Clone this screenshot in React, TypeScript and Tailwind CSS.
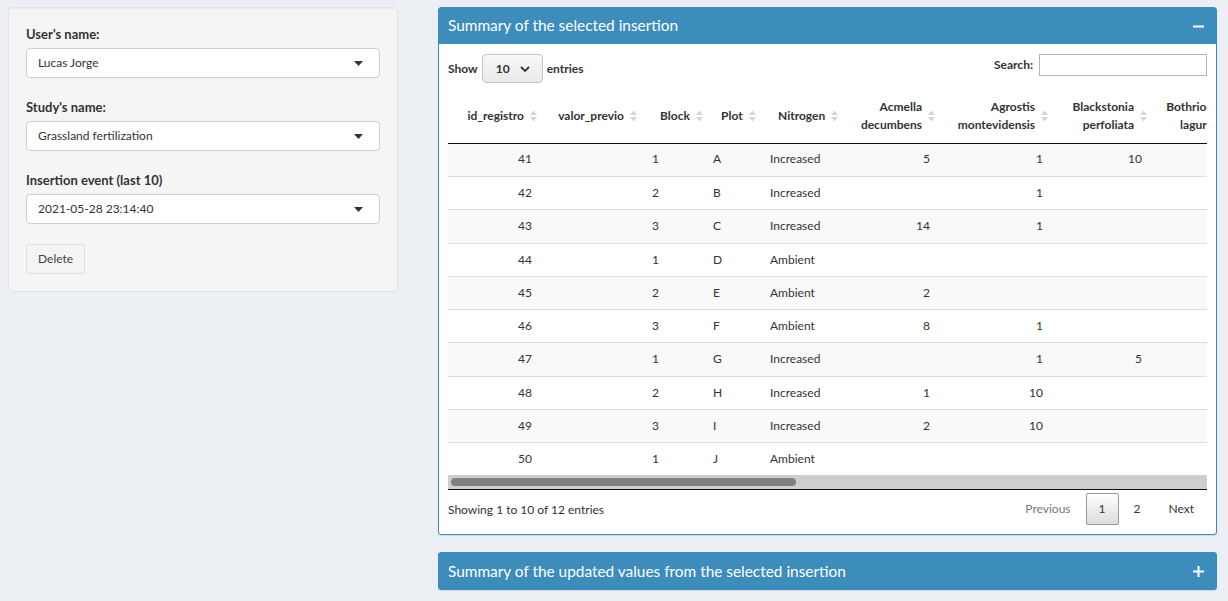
import React from 'react';

type Col = {
  key: string;
  label: string[];
  width: string;
  right: boolean;
};

const columns: Col[] = [
  { key: 'id', label: ['id_registro'], width: 'w-[94px]', right: true },
  { key: 'valor', label: ['valor_previo'], width: 'w-[100px]', right: true },
  { key: 'block', label: ['Block'], width: 'w-[61px]', right: false },
  { key: 'plot', label: ['Plot'], width: 'w-[57px]', right: false },
  { key: 'nitrogen', label: ['Nitrogen'], width: 'w-[85px]', right: false },
  { key: 'acm', label: ['Acmella', 'decumbens'], width: 'w-[95px]', right: true },
  { key: 'agr', label: ['Agrostis', 'montevidensis'], width: 'w-[113px]', right: true },
  { key: 'bla', label: ['Blackstonia', 'perfoliata'], width: 'w-[99px]', right: true },
  { key: 'bot', label: ['Bothriochloa', 'laguroides'], width: 'w-[101px]', right: true },
  { key: 'bri', label: ['Briza', 'minor'], width: 'w-[80px]', right: true },
  { key: 'car', label: ['Carex', 'bonariensis'], width: 'w-[100px]', right: true },
];

type Row = Record<string, string>;

const rows: Row[] = [
  { id: '41', block: '1', plot: 'A', nitrogen: 'Increased', acm: '5', agr: '1', bla: '10' },
  { id: '42', block: '2', plot: 'B', nitrogen: 'Increased', agr: '1' },
  { id: '43', block: '3', plot: 'C', nitrogen: 'Increased', acm: '14', agr: '1' },
  { id: '44', block: '1', plot: 'D', nitrogen: 'Ambient' },
  { id: '45', block: '2', plot: 'E', nitrogen: 'Ambient', acm: '2' },
  { id: '46', block: '3', plot: 'F', nitrogen: 'Ambient', acm: '8', agr: '1' },
  { id: '47', block: '1', plot: 'G', nitrogen: 'Increased', agr: '1', bla: '5' },
  { id: '48', block: '2', plot: 'H', nitrogen: 'Increased', acm: '1', agr: '10' },
  { id: '49', block: '3', plot: 'I', nitrogen: 'Increased', acm: '2', agr: '10' },
  { id: '50', block: '1', plot: 'J', nitrogen: 'Ambient' },
];

const SortIcon = () => (
  <svg width="7" height="14" viewBox="0 0 7 14" className="shrink-0">
    <polygon points="0,6 3.5,1.5 7,6" fill="#d6d6d6" />
    <polygon points="0,8 3.5,12.5 7,8" fill="#d6d6d6" />
  </svg>
);

const Caret = () => (
  <svg width="9" height="5" viewBox="0 0 9 5">
    <polygon points="0,0 9,0 4.5,5" fill="#333" />
  </svg>
);

const FakeSelect = ({ value }: { value: string }) => (
  <div className="flex h-[30px] items-center justify-between rounded-[4px] border border-[#cfcfcf] bg-white pl-[11px] pr-[16px] text-[12px] text-[#333]">
    <span>{value}</span>
    <Caret />
  </div>
);

const Field = ({ label, value }: { label: string; value: string }) => (
  <div className="mb-[20px]">
    <div className="mb-[5px] text-[13px] font-bold leading-[18px] text-[#333]">{label}</div>
    <FakeSelect value={value} />
  </div>
);

const App: React.FC = () => {
  return (
    <div className="min-h-screen bg-[#ecf0f5] font-[Lato,sans-serif] text-[#333]">
      <div className="flex gap-[40px] pl-[8px] pt-[7px]">
        {/* sidebar well */}
        <div className="w-[390px] self-start rounded-[4px] border border-[#e3e3e3] bg-[#f5f5f5] p-[17px] shadow-[inset_0_1px_1px_rgba(0,0,0,0.05)]">
          <Field label="User's name:" value="Lucas Jorge" />
          <Field label="Study's name:" value="Grassland fertilization" />
          <Field label="Insertion event (last 10)" value="2021-05-28 23:14:40" />
          <button className="h-[30px] rounded-[3px] border border-[#ddd] bg-[#f4f4f4] px-[11px] text-[12px] text-[#444]">
            Delete
          </button>
        </div>

        <div className="w-[779px]">
          {/* main box */}
          <div className="mb-[17px] rounded-[3px] border border-[#3c8dbc] bg-white shadow-[0_1px_1px_rgba(0,0,0,0.1)]">
            <div className="flex h-[36px] items-center justify-between bg-[#3c8dbc] pl-[9px] pr-[12px] text-white">
              <span className="text-[15.4px]">Summary of the selected insertion</span>
              <svg width="11" height="11" viewBox="0 0 11 11">
                <rect x="0" y="4.5" width="11" height="2" fill="#fff" />
              </svg>
            </div>
            <div className="px-[9px] pb-[9px] pt-[10px]">
              <div className="flex items-start justify-between">
                <div className="flex h-[29px] items-center text-[12px] font-bold">
                  <span>Show</span>
                  <div className="mx-[4px] flex h-[29px] w-[61px] items-center justify-between rounded-[4px] border border-[#c4c4c4] bg-gradient-to-b from-[#f8f8f8] to-[#e9e9e9] pl-[13px] pr-[12px]">
                    <span>10</span>
                    <svg width="10" height="6" viewBox="0 0 10 6">
                      <path d="M1 1 L5 5 L9 1" stroke="#333" strokeWidth="1.8" fill="none" />
                    </svg>
                  </div>
                  <span>entries</span>
                </div>
                <div className="flex h-[22px] items-center text-[12px] font-bold">
                  <span className="mr-[6px]">Search:</span>
                  <div className="h-[22px] w-[168px] border border-[#b5b5b5] bg-white" />
                </div>
              </div>

              <div className="mt-[6px] w-[759px] overflow-hidden border-b border-[#111]">
                <table className="w-[985px] table-fixed border-separate border-spacing-0 text-[12px]">
                  <colgroup>
                    {columns.map((c) => (
                      <col key={c.key} className={c.width} />
                    ))}
                  </colgroup>
                  <thead>
                    <tr>
                      {columns.map((c) => (
                        <th key={c.key} className="h-[55px] border-b border-[#111] p-0 align-middle font-bold">
                          <div
                            className={
                              c.right
                                ? 'flex items-center justify-end gap-[6px] pr-[5px]'
                                : 'flex items-center justify-start gap-[6px] pl-[18px]'
                            }
                          >
                            <div className={c.right ? 'whitespace-nowrap text-right leading-[18px]' : 'whitespace-nowrap text-left leading-[18px]'}>
                              {c.label.map((l) => (
                                <div key={l}>{l}</div>
                              ))}
                            </div>
                            <SortIcon />
                          </div>
                        </th>
                      ))}
                    </tr>
                  </thead>
                  <tbody>
                    {rows.map((r, i) => (
                      <tr key={r.id} className={i % 2 === 0 ? 'bg-[#f9f9f9]' : 'bg-white'}>
                        {columns.map((c) => (
                          <td
                            key={c.key}
                            className={
                              (i === 0 ? 'h-[32px] pb-[2px] ' : 'h-[33.25px] border-t border-[#ddd] ') +
                              (c.right ? 'pr-[10px] text-right' : 'pl-[10px] text-left')
                            }
                          >
                            {r[c.key] ?? ''}
                          </td>
                        ))}
                      </tr>
                    ))}
                  </tbody>
                </table>
                <div className="h-[14px] bg-[#cecece] pl-[3px] pt-[3px]">
                  <div className="h-[8px] w-[345px] rounded-full bg-[#7e8181]" />
                </div>
              </div>

              <div className="flex items-start justify-between text-[12px]">
                <div className="pt-[11px]">Showing 1 to 10 of 12 entries</div>
                <div className="flex items-center pt-[3px]">
                  <span className="ml-[2px] flex h-[32px] items-center border border-transparent px-[12px] text-[#777]">Previous</span>
                  <span className="ml-[2px] flex h-[32px] items-center rounded-[2px] border border-[#979797] bg-gradient-to-b from-white to-[#dcdcdc] px-[12px]">1</span>
                  <span className="ml-[2px] flex h-[32px] items-center border border-transparent px-[12px]">2</span>
                  <span className="ml-[2px] flex h-[32px] items-center border border-transparent px-[12px]">Next</span>
                </div>
              </div>
            </div>
          </div>

          {/* collapsed box */}
          <div className="flex h-[38px] items-center justify-between rounded-[3px] border border-[#3c8dbc] bg-[#3c8dbc] pl-[9px] pr-[12px] text-white shadow-[0_1px_1px_rgba(0,0,0,0.1)]">
            <span className="text-[15.4px]">Summary of the updated values from the selected insertion</span>
            <svg width="11" height="11" viewBox="0 0 11 11">
              <rect x="0" y="4.5" width="11" height="2" fill="#fff" />
              <rect x="4.5" y="0" width="2" height="11" fill="#fff" />
            </svg>
          </div>
        </div>
      </div>
    </div>
  );
};

export default App;
